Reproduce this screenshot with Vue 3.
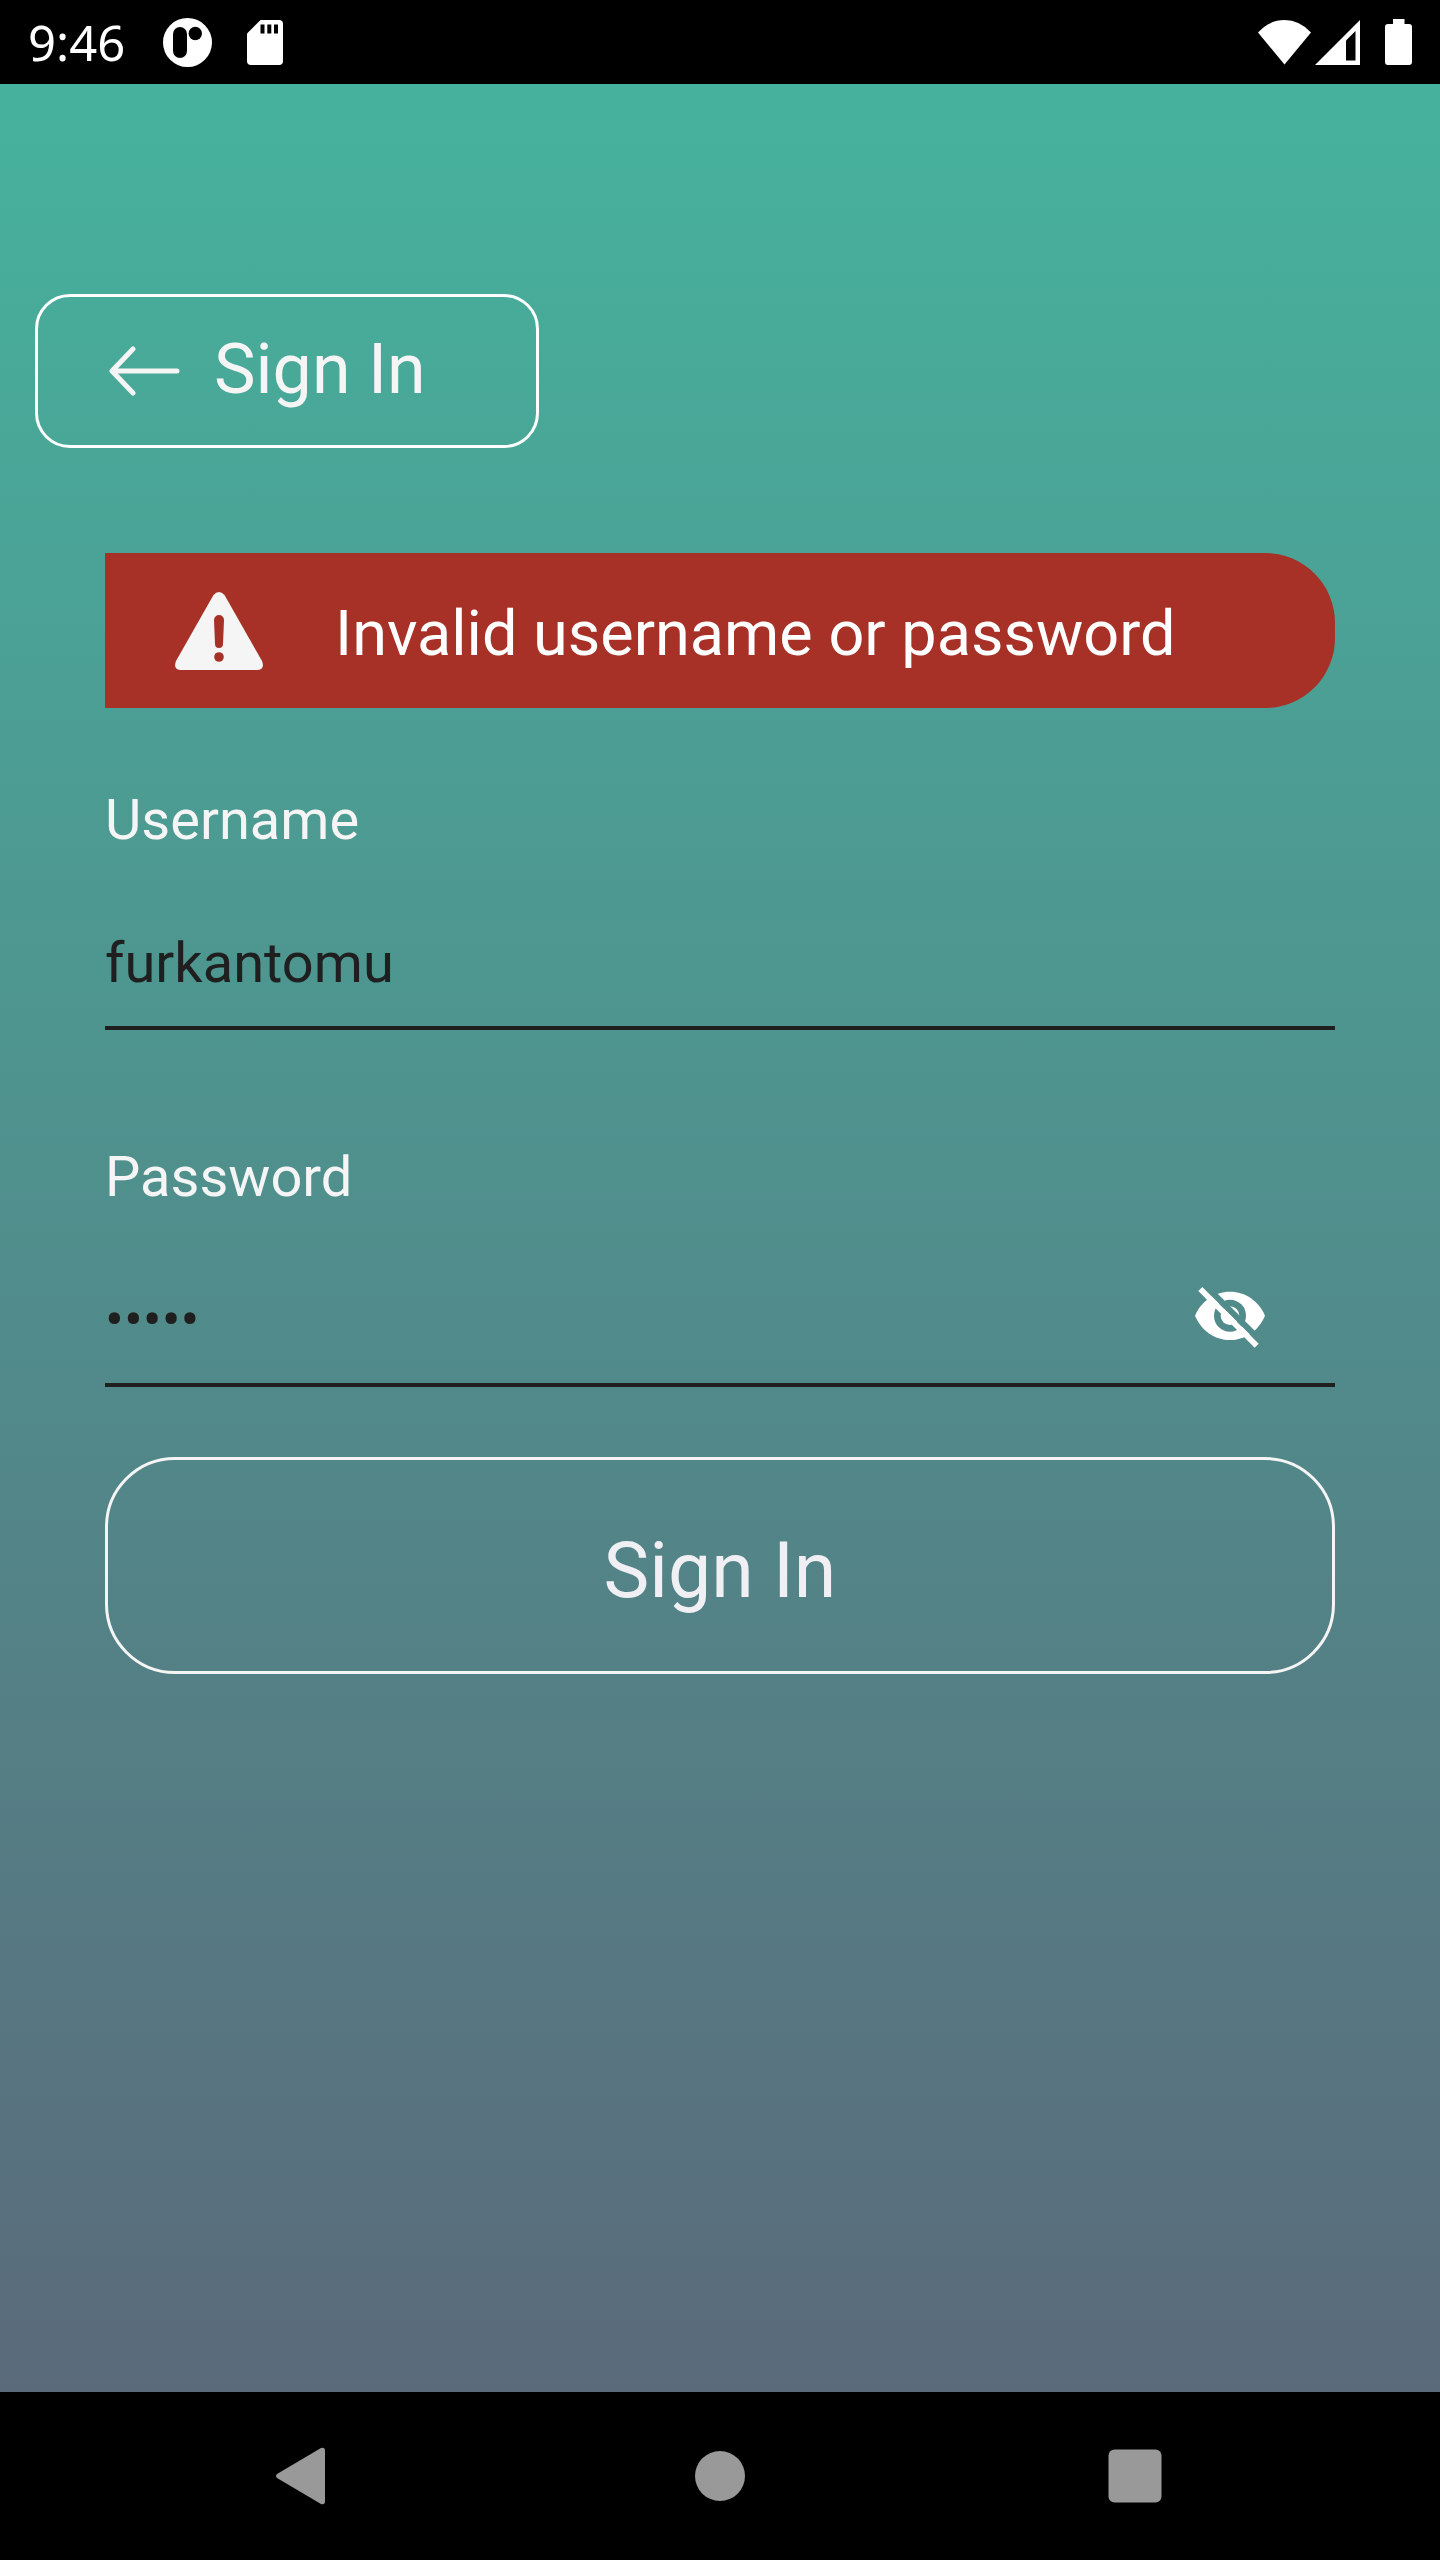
<script setup>
import { ref } from 'vue'

const username = ref('furkantomu')
const password = ref('12345')
const visible = ref(false)
const error = ref('Invalid username or password')
</script>

<template>
  <div class="screen">
    <header class="status">
      <time class="clock">9:46</time>
      <svg class="notice" width="49" height="49" viewBox="0 0 49 49" aria-hidden="true">
        <circle cx="24.5" cy="24.5" r="24.5" fill="#fff" />
        <rect x="10" y="9" width="14" height="31" rx="7" />
        <circle cx="32.3" cy="15.5" r="6.7" />
      </svg>
      <svg class="card" width="36" height="45" viewBox="0 0 36 45" aria-hidden="true">
        <path d="M13.5 0H32a4 4 0 0 1 4 4V41a4 4 0 0 1-4 4H4a4 4 0 0 1-4-4V13.5Z" fill="#fff" />
        <path d="M13.5 4.5h4v9h-4zM20.3 4.5h4v9h-4zM27 4.5h4v9h-4z" />
      </svg>
      <svg class="wifi" width="53" height="45" viewBox="0 0 53 45" fill="#fff" aria-hidden="true">
        <path d="M26.500 44.500L0 12.500Q11.500 0 26.500 0T53 12.500Z" />
      </svg>
      <svg class="signal" width="45" height="45" viewBox="0 0 45 45" aria-hidden="true">
        <path d="M45 0V45H0Z" fill="#fff" />
        <path d="M31 20.500L40.500 11V40.500H31Z" />
      </svg>
      <svg class="battery" width="27" height="46" viewBox="0 0 27 46" fill="#fff" aria-hidden="true">
        <path d="M8 0h11.500v5H24a3 3 0 0 1 3 3v35a3 3 0 0 1-3 3H3a3 3 0 0 1-3-3V8a3 3 0 0 1 3-3h5z" />
      </svg>
    </header>

    <main class="content">
      <button class="back" type="button">
        <svg width="72" height="52" viewBox="0 0 72 52" fill="none" stroke="#f5f5f5" stroke-width="5" stroke-linecap="round" stroke-linejoin="round" aria-hidden="true">
          <path d="M24 4L3 26L24 48M3 26H68" />
        </svg>
        <span>Sign In</span>
      </button>

      <form class="form" @submit.prevent>
        <div class="alert" role="alert">
          <svg width="88" height="78" viewBox="0 0 88 78" aria-hidden="true">
            <path d="M38.500 3Q44 -3 49.500 3L87 69Q90 77 83 78H5Q-2 77 1 69Z" fill="#f5f5f5" />
            <path d="M39 28a5 5 0 0 1 10 0l-1 24a4 4 0 0 1-8 0z" fill="#a73127" />
            <circle cx="44" cy="65" r="4.800" fill="#a73127" />
          </svg>
          <span>{{ error }}</span>
        </div>

        <div class="field">
          <label for="username">Username</label>
          <div class="entry">
            <input id="username" v-model="username" type="text" autocomplete="off" spellcheck="false" />
          </div>
        </div>

        <div class="field">
          <label for="password">Password</label>
          <div class="entry">
            <input id="password" v-model="password" :type="visible ? 'text' : 'password'" autocomplete="off" />
            <button class="toggle" type="button" aria-label="Show password" @click="visible = !visible">
              <svg width="70" height="61" viewBox="105 80 210 183" aria-hidden="true">
                <mask id="eye-cut" maskUnits="userSpaceOnUse" x="100" y="75" width="220" height="195">
                  <rect x="100" y="75" width="220" height="195" fill="#fff" />
                  <circle cx="210" cy="166" r="48" />
                  <circle cx="210" cy="166" r="28" fill="#fff" />
                  <path d="M130 70L320 260" stroke="#000" stroke-width="18" />
                </mask>
                <path d="M105 166C124 122 163 94 210 94S296 122 315 166C296 210 257 239 210 239S124 210 105 166Z" fill="#fff" mask="url(#eye-cut)" />
                <path d="M121 86L290 256" stroke="#fff" stroke-width="17" />
              </svg>
            </button>
          </div>
        </div>

        <button class="submit" type="submit">Sign In</button>
      </form>
    </main>

    <nav class="system" aria-label="System">
      <button type="button" aria-label="Back">
        <svg width="58" height="58" viewBox="0 0 58 58" fill="#999">
          <path d="M45 1Q49 0 49 4V54Q49 58 45 57L1 31Q-1 29 1 27Z" />
        </svg>
      </button>
      <button type="button" aria-label="Home">
        <svg width="50" height="50" viewBox="0 0 50 50" fill="#999">
          <circle cx="25" cy="25" r="25" />
        </svg>
      </button>
      <button type="button" aria-label="Recent apps">
        <svg width="54" height="54" viewBox="0 0 54 54" fill="#999">
          <rect x="0.500" y="0.500" width="53" height="53" rx="6" />
        </svg>
      </button>
    </nav>
  </div>
</template>

<style>
body {
  margin: 0;
}
</style>

<style scoped>
.screen {
  display: flex;
  flex-direction: column;
  min-height: 100vh;
  background: #000;
  color: #f5f5f5;
  font-family: Roboto, "Liberation Sans", sans-serif;
}

button,
input {
  margin: 0;
  padding: 0;
  border: 0;
  background: none;
  color: inherit;
  font: inherit;
}

svg {
  display: block;
  flex: none;
}

.status {
  display: flex;
  align-items: center;
  box-sizing: border-box;
  height: 84px;
  padding: 0 28px;
}

.clock {
  min-width: 97px;
  color: #fff;
  font: 49px/70px "Noto Sans", sans-serif;
}

.notice {
  margin-left: 38px;
}

.card {
  margin-left: 35px;
}

.wifi {
  margin-left: auto;
}

.signal {
  margin-left: 4px;
}

.battery {
  margin-left: 25px;
}

.content {
  flex: 1;
  padding: 210px 0 70px;
  background: linear-gradient(#46b29d, #5a6a7b);
}

.back {
  display: flex;
  align-items: center;
  gap: 33px;
  box-sizing: border-box;
  width: 35%;
  min-width: 440px;
  height: 154px;
  margin-left: 35px;
  padding-left: 71px;
  border: 3px solid #fff;
  border-radius: 35px;
  font-size: 70px;
  line-height: 82px;
}

.back span {
  padding-bottom: 4px;
}

.form {
  margin: 105px 105px 0;
}

.alert {
  display: flex;
  align-items: center;
  gap: 72px;
  min-height: 155px;
  padding-left: 70px;
  border-radius: 0 70px 70px 0;
  background: #a73127;
  color: #fff;
  font-size: 63px;
  line-height: 74px;
}

.alert span {
  padding-top: 6px;
}

.field {
  padding-top: 114px;
}

.alert + .field {
  padding-top: 79px;
}

label {
  display: block;
  font-size: 56px;
  line-height: 66px;
}

.entry {
  display: flex;
  align-items: center;
  box-sizing: border-box;
  height: 129px;
  margin-top: 48px;
  padding-bottom: 2px;
  border-bottom: 4px solid #1f1f1f;
}

input {
  flex: 1;
  min-width: 0;
  height: 66px;
  outline: none;
  color: #1f1f1f;
  font-size: 56px;
  line-height: 66px;
}

.toggle {
  margin: 0 70px 4px 0;
}

.submit {
  display: block;
  box-sizing: border-box;
  width: 100%;
  height: 217px;
  margin-top: 70px;
  padding-top: 10px;
  border: 3px solid #f5f5f5;
  border-radius: 70px;
  color: #efeff4;
  font-size: 77px;
  line-height: 90px;
}

.system {
  display: flex;
  justify-content: center;
  gap: 247px;
  height: 168px;
}

.system button {
  display: flex;
  align-items: center;
  justify-content: center;
  width: 168px;
}
</style>
